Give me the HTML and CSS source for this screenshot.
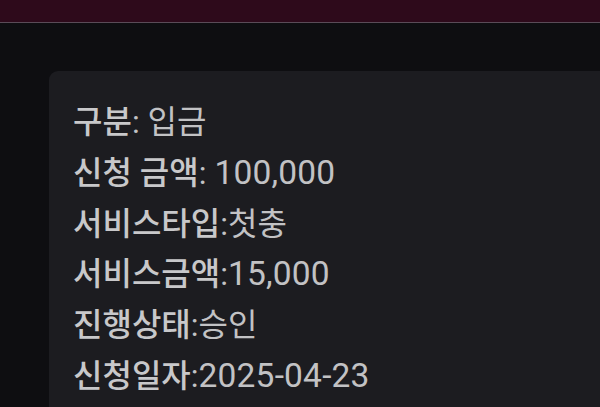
FILE: index.html
```html
<!DOCTYPE html>
<html lang="ko">
<head>
<meta charset="utf-8">
<link rel="stylesheet" href="styles.css">
</head>
<body>
<header class="topbar"></header>
<main class="content">
  <section class="card">
    <p class="row"><b class="label">구분</b>: 입금</p>
    <p class="row"><b class="label">신청 금액</b>: <span class="num">100,000</span></p>
    <p class="row"><b class="label">서비스타입</b>:첫충</p>
    <p class="row"><b class="label">서비스금액</b>:<span class="num">15,000</span></p>
    <p class="row"><b class="label">진행상태</b>:승인</p>
    <p class="row"><b class="label">신청일자</b>:<span class="num">2025-04-23</span></p>
  </section>
</main>
</body>
</html>
```
FILE: styles.css
```css
html, body {
  margin: 0;
  padding: 0;
  height: 100%;
  overflow: hidden;
}
body {
  background: #0e0e11;
  font-family: "Roboto", "Noto Sans CJK KR", sans-serif;
  color: #c2c2c4;
}
.topbar {
  height: 22px;
  background: #2e0a1b;
  border-bottom: 1px solid #5a4c58;
}
.content {
  padding: 48px 0 0 49px;
}
.card {
  background: #1c1c20;
  border-radius: 9px 0 0 0;
  margin-right: -20px;
  padding: 26px 24px 40px;
}
.row {
  margin: 0;
  font-size: 32px;
  line-height: 50.8px;
  white-space: nowrap;
}
.label {
  font-weight: 500;
  color: #c8c8ca;
}
.num {
  font-size: 33.5px;
  letter-spacing: 0.2px;
}
```
